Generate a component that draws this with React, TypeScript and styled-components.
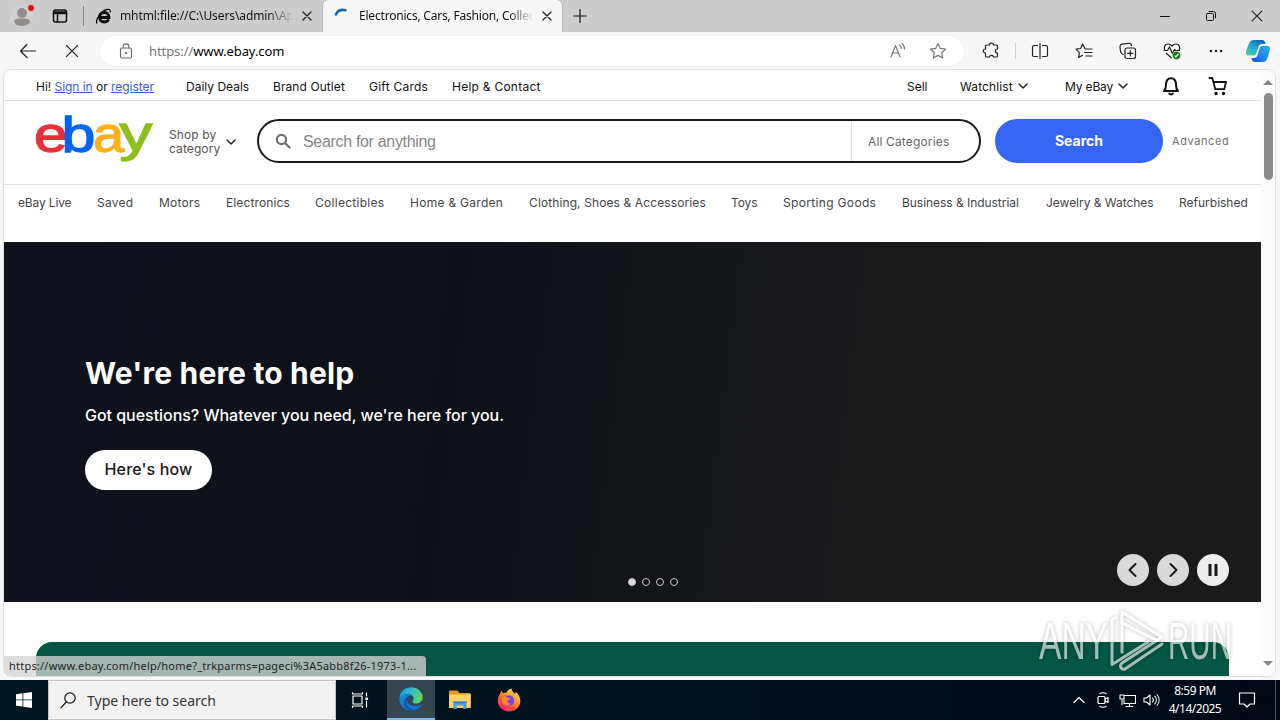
import React from 'react';
import styled, { createGlobalStyle } from 'styled-components';

const UI_FONT = "'Noto Sans', 'Open Sans', sans-serif";
const MARKET_FONT = "Inter, 'Liberation Sans', sans-serif";

const GlobalStyle = createGlobalStyle`
  * {
    box-sizing: border-box;
  }

  body {
    margin: 0;
    overflow: hidden;
    background: #f7f7f7;
  }

  svg {
    display: block;
    flex: none;
  }
`;

const Screen = styled.div`
  position: relative;
  width: 1280px;
  height: 720px;
  display: flex;
  flex-direction: column;
  overflow: hidden;
  background: #f7f7f7;
  font-family: ${UI_FONT};
  white-space: nowrap;
`;

/* Tab strip */

const TabStrip = styled.div`
  height: 32px;
  display: flex;
  align-items: stretch;
  background: #cccccc;
`;

const ProfileArea = styled.div`
  width: 83px;
  display: flex;
  align-items: center;
  padding-left: 11px;
  gap: 15px;
`;

const TabSeparator = styled.div`
  width: 1px;
  height: 20px;
  align-self: center;
  background: #858585;
`;

const Tab = styled.div<{ $active?: boolean; $width: number }>`
  width: ${(props) => props.$width}px;
  display: flex;
  align-items: center;
  padding: 0 10px 0 11px;
  font-size: 12px;
  color: #111;
  background: ${(props) => (props.$active ? '#f7f7f7' : 'transparent')};
  border-left: ${(props) => (props.$active ? '1px solid #b4b4b4' : 'none')};
  border-right: ${(props) => (props.$active ? '1px solid #b4b4b4' : 'none')};
  border-radius: ${(props) => (props.$active ? '6px 6px 0 0' : '0')};
`;

const TabTitle = styled.span<{ $spacing: number }>`
  flex: 1;
  margin: 0 10px 0 8px;
  overflow: hidden;
  line-height: 18px;
  letter-spacing: ${(props) => props.$spacing}px;
  mask-image: linear-gradient(90deg, #000 86%, transparent 101%);
`;

const NewTab = styled.div`
  width: 34px;
  display: flex;
  align-items: center;
  justify-content: center;
`;

const WindowControls = styled.div`
  margin-left: auto;
  display: grid;
  grid-template-columns: 46px 46px 46px;
  align-items: center;
  justify-items: center;
`;

/* Toolbar */

const Toolbar = styled.div`
  height: 37px;
  flex: none;
  display: flex;
  align-items: center;
  background: #f7f7f7;
`;

const ToolButton = styled.div<{ $width: number }>`
  width: ${(props) => props.$width}px;
  flex: none;
  display: flex;
  align-items: center;
  justify-content: center;
`;

const AddressBar = styled.div`
  width: 864px;
  height: 30px;
  display: flex;
  align-items: center;
  padding: 0 16px 0 17px;
  border-radius: 15px;
  background: #fff;
  box-shadow: 0 0 2px rgba(0, 0, 0, 0.08);
`;

const Url = styled.span`
  flex: 1;
  margin-left: 14px;
  font-size: 13px;
  letter-spacing: -0.08px;
  color: #000;

  span {
    color: #767676;
  }
`;

const ToolDivider = styled.div`
  width: 1px;
  height: 16px;
  margin: 0 1px 0 -3px;
  background: #d0d0d0;
`;

/* Page frame */

const Viewport = styled.div`
  position: relative;
  width: 1273px;
  height: 608px;
  flex: none;
  margin-left: 3px;
  display: flex;
  overflow: hidden;
  border: 1px solid #dedede;
  border-radius: 8px;
  background: #fff;
`;

const Page = styled.div`
  width: 1257px;
  display: flex;
  flex-direction: column;
  font-family: ${MARKET_FONT};
  overflow: hidden;
`;

const Scrollbar = styled.div`
  width: 14px;
  display: flex;
  flex-direction: column;
  align-items: center;
  padding: 10px 0;
  background: #fcfcfc;
`;

const Thumb = styled.div`
  width: 9px;
  height: 87px;
  margin: 8px 0 auto;
  border-radius: 5px;
  background: #8b8b8b;
`;

const UtilityBar = styled.div`
  height: 31px;
  flex: none;
  display: flex;
  align-items: center;
  padding: 2px 0 0 32px;
  border-bottom: 1px solid #e0e0e0;
  font-size: 12px;
  color: #111;
`;

const UtilityItem = styled.div<{ $width: number; $spacing?: number }>`
  width: ${(props) => props.$width}px;
  flex: none;
  display: flex;
  align-items: center;
  letter-spacing: ${(props) => props.$spacing ?? 0}px;

  svg {
    margin-left: 5px;
  }
`;

const Link = styled.span`
  color: #3559d8;
  text-decoration: underline;
`;

const SearchHeader = styled.div`
  height: 84px;
  flex: none;
  display: flex;
  align-items: flex-start;
  padding: 12px 0 0 32px;
  border-bottom: 1px solid #e0e0e0;
`;

const ShopBy = styled.div`
  width: 88px;
  display: flex;
  align-items: center;
  gap: 6px;
  margin: 15px 0 0 15px;
  font-size: 12px;
  line-height: 14px;
  letter-spacing: 0.1px;
  color: #555;
`;

const SearchBox = styled.div`
  width: 724px;
  height: 44px;
  display: flex;
  align-items: center;
  margin: 6px 14px 0 0;
  padding-left: 16px;
  border: 2px solid #191919;
  border-radius: 22px;
`;

const Placeholder = styled.span`
  flex: 1;
  margin-left: 12px;
  padding-top: 2px;
  font-family: 'Liberation Sans', Arial, sans-serif;
  font-size: 16px;
  letter-spacing: -0.32px;
  color: #858585;
`;

const CategorySelect = styled.div`
  width: 128px;
  height: 40px;
  display: flex;
  align-items: center;
  padding-left: 16px;
  border-left: 1px solid #dcdcdc;
  font-size: 12px;
  letter-spacing: 0.15px;
  color: #666;
`;

const SearchButton = styled.div`
  width: 168px;
  height: 44px;
  margin-top: 6px;
  display: flex;
  align-items: center;
  justify-content: center;
  border-radius: 22px;
  background: #3665f3;
  color: #fff;
  font-size: 14px;
  font-weight: 700;
  line-height: 16px;
`;

const Advanced = styled.div`
  margin: 21px 0 0 9px;
  font-size: 11px;
  line-height: 14px;
  letter-spacing: 0.58px;
  color: #707070;
`;

const CategoryNav = styled.div`
  height: 57px;
  flex: none;
  display: flex;
  padding: 10px 0 0 14px;
  font-size: 12px;
  line-height: 16px;
  color: #444;
`;

const CategoryLink = styled.span<{ $width: number; $spacing: number }>`
  width: ${(props) => props.$width}px;
  flex: none;
  letter-spacing: ${(props) => props.$spacing}px;
`;

/* Hero carousel */

const Hero = styled.div`
  position: relative;
  height: 360px;
  flex: none;
  display: flex;
  flex-direction: column;
  align-items: flex-start;
  padding: 113px 0 0 81px;
  background: linear-gradient(97deg, #0f121a 0%, #0e1118 36%, #131519 50%, #18181a 66%, #1a1a1a 80%);
  color: #fff;
`;

const HeroTitle = styled.h2`
  margin: 0;
  font-size: 30px;
  line-height: 36px;
  font-weight: 700;
  letter-spacing: 0.17px;
`;

const HeroText = styled.p`
  margin: 12px 0 0;
  font-size: 16px;
  line-height: 24px;
  font-weight: 500;
  letter-spacing: -0.03px;
`;

const HeroButton = styled.div`
  width: 127px;
  height: 40px;
  margin-top: 23px;
  padding-bottom: 2px;
  display: flex;
  align-items: center;
  justify-content: center;
  border-radius: 20px;
  background: #fff;
  color: #191919;
  font-size: 16px;
  font-weight: 500;
  letter-spacing: 0.15px;
`;

const Dots = styled.div`
  position: absolute;
  left: 624px;
  bottom: 16px;
  display: flex;
  gap: 6px;
`;

const Dot = styled.span<{ $filled?: boolean }>`
  width: 8px;
  height: 8px;
  border: 1px solid #c7c7c7;
  border-radius: 50%;
  background: ${(props) => (props.$filled ? '#dcdcdc' : 'transparent')};
`;

const CarouselControls = styled.div`
  position: absolute;
  right: 32px;
  bottom: 16px;
  display: flex;
  gap: 8px;
`;

const RoundButton = styled.div<{ $bright?: boolean }>`
  width: 32px;
  height: 32px;
  display: flex;
  align-items: center;
  justify-content: center;
  border-radius: 50%;
  background: ${(props) => (props.$bright ? '#ededed' : '#d9d9d9')};
`;

const GreenBanner = styled.div`
  height: 60px;
  flex: none;
  margin: 40px 32px 0;
  border-radius: 16px 16px 0 0;
  background: #055642;
`;

const StatusBubble = styled.div`
  position: absolute;
  left: 0;
  bottom: 0;
  width: 422px;
  height: 20px;
  padding-left: 5px;
  border-radius: 0 4px 0 0;
  background: rgba(212, 212, 212, 0.77);
  font-size: 11px;
  line-height: 19px;
  letter-spacing: 0.22px;
  color: #1d2422;
`;

const Watermark = styled.svg`
  position: absolute;
  left: 1030px;
  top: 604px;
  opacity: 0.62;
  overflow: visible;
  font-family: 'Liberation Sans', Arial, sans-serif;
  font-size: 51px;
  filter: drop-shadow(0 0 2px rgba(0, 0, 0, 0.45));
`;

/* Taskbar */

const Taskbar = styled.div`
  height: 40px;
  flex: none;
  display: flex;
  align-items: center;
  margin-top: 3px;
  background: linear-gradient(90deg, #001620 0%, #00121e 42%, #010b1a 80%, #010917 100%);
  color: #fff;
`;

const TaskSearch = styled.div`
  width: 288px;
  height: 40px;
  display: flex;
  align-items: center;
  gap: 11px;
  padding-left: 11px;
  border: 1px solid #c4c4c4;
  background: #f2f2f2;
  color: #333;
  font-size: 14px;
`;

const TaskButton = styled.div<{ $width: number; $open?: boolean }>`
  width: ${(props) => props.$width}px;
  height: 40px;
  flex: none;
  display: flex;
  align-items: center;
  justify-content: center;
  background: ${(props) => (props.$open ? '#34464f' : 'transparent')};
  border-bottom: ${(props) => (props.$open ? '2px solid #76b9ed' : 'none')};
`;

const TaskViewButton = styled(TaskButton)`
  padding-right: 3px;
`;

const Tray = styled.div`
  margin-left: auto;
  height: 40px;
  display: flex;
  align-items: center;
`;

const Clock = styled.div`
  width: 64px;
  text-align: center;
  font-size: 12px;
  line-height: 18px;
  letter-spacing: -0.5px;
`;

const DesktopPeek = styled.div`
  width: 5px;
  height: 40px;
  border-left: 1px solid #4d5661;
`;

const categories = [
  { label: 'eBay Live', width: 79, spacing: -0.15 },
  { label: 'Saved', width: 62, spacing: 0.25 },
  { label: 'Motors', width: 67, spacing: 0.25 },
  { label: 'Electronics', width: 89, spacing: 0.12 },
  { label: 'Collectibles', width: 95, spacing: 0.28 },
  { label: 'Home & Garden', width: 119, spacing: 0.28 },
  { label: 'Clothing, Shoes & Accessories', width: 202, spacing: 0.11 },
  { label: 'Toys', width: 52, spacing: -0.1 },
  { label: 'Sporting Goods', width: 119, spacing: 0.33 },
  { label: 'Business & Industrial', width: 144, spacing: -0.04 },
  { label: 'Jewelry & Watches', width: 133, spacing: -0.03 },
  { label: 'Refurbished', width: 72, spacing: 0 },
];

interface IconProps {
  width?: number;
  height?: number;
  viewBox?: string;
  stroke?: string;
  weight?: number;
  children: React.ReactNode;
}

const LineIcon: React.FC<IconProps> = ({
  width = 18,
  height = 18,
  viewBox,
  stroke = '#222',
  weight = 1.2,
  children,
}) => (
  <svg
    width={width}
    height={height}
    viewBox={viewBox ?? `0 0 ${width} ${height}`}
    fill="none"
    stroke={stroke}
    strokeWidth={weight}
    strokeLinecap="round"
    strokeLinejoin="round"
  >
    {children}
  </svg>
);

const Chevron = ({ weight = 1.5 }: { weight?: number }) => (
  <LineIcon width={10} height={8} weight={weight}>
    <path d="M1 2l4 4 4-4" />
  </LineIcon>
);

const CloseIcon = ({ size = 10, weight = 1.3 }: { size?: number; weight?: number }) => (
  <LineIcon width={size} height={size} viewBox="0 0 10 10" weight={weight}>
    <path d="M1 1l8 8M9 1L1 9" />
  </LineIcon>
);

const ProfileIcon = () => (
  <svg width="26" height="26" viewBox="0 0 26 26">
    <circle cx="11" cy="13" r="11" fill="#d3d0ce" />
    <circle cx="11" cy="10" r="4.900" fill="#8f8d8c" />
    <path d="M3 19c0-3 3-3.500 8-3.500s8 .5 8 3.500c-1.500 3-4.500 4-8 4s-6.500-1-8-4z" fill="#8f8d8c" />
    <circle cx="20" cy="5" r="3.400" fill="#e00b12" stroke="#eee" strokeWidth=".6" />
  </svg>
);

const CopilotLogo = () => (
  <svg width="26" height="26" viewBox="0 0 26 26">
    <defs>
      <linearGradient id="copA" x1="0" y1="1" x2=".7" y2="0">
        <stop offset="0" stopColor="#62d184" />
        <stop offset=".4" stopColor="#24b8cf" />
        <stop offset="1" stopColor="#1268c3" />
      </linearGradient>
      <linearGradient id="copB" x1="1" y1="0" x2="0" y2="1">
        <stop offset="0" stopColor="#21b7f1" />
        <stop offset=".5" stopColor="#2388ec" />
        <stop offset="1" stopColor="#1550cb" />
      </linearGradient>
    </defs>
    <path d="M9 2h8c2.500 0 3 2 3.600 4H17c-2 0-3 1-3.600 3l-2 6c-.7 2-1.600 2.500-3.400 2.500H4c-3 0-3.700-2-2.800-5L4 5.500C5 3 6.500 2 9 2z" fill="url(#copA)" />
    <path d="M17.500 24H10c-2.500 0-3-2-3.600-4H9c2 0 3-1 3.600-3l2-6.500c.7-2 1.600-2.800 3.400-2.800h4c3 0 3.500 2.300 2.700 5L22.500 20c-1 3-2.500 4-5 4z" fill="url(#copB)" />
  </svg>
);

const EdgeLogo = () => (
  <svg width="24" height="24" viewBox="0 0 24 24">
    <defs>
      <linearGradient id="edgeTop" x1="0" y1=".3" x2="1" y2=".5">
        <stop offset="0" stopColor="#1b9de2" />
        <stop offset=".55" stopColor="#35c1c6" />
        <stop offset="1" stopColor="#61d84b" />
      </linearGradient>
      <linearGradient id="edgeBody" x1="0" y1="0" x2="1" y2="1">
        <stop offset="0" stopColor="#1994df" />
        <stop offset="1" stopColor="#0c59a4" />
      </linearGradient>
    </defs>
    <path d="M.5 11C1 4.500 6 .3 12 .3c7 0 11.700 5 11.700 10 0 4-3 6.200-6.300 6.200-2.800 0-4-1-4-1.800 0-.8 1.200-1.200 1.200-3.200 0-2.500-2.300-4.300-5.500-4.300C4.500 7.200 1.500 9.500.5 11z" fill="url(#edgeTop)" />
    <path d="M.5 11c1-2.300 4-3.800 7.500-3.800 1.500 0 3 .3 4 1-3 1-4.500 3.500-4.500 6.300 0 4.500 4 8 8.800 8.500-1.300.5-2.700.8-4.300.8C5 23.800-.2 18 .5 11z" fill="url(#edgeBody)" />
    <path d="M8.500 13.500c0-2 1-4 2.800-4.700-5 1-7.300 6-5 10.200 2 3.500 6 5 10 4 2.800-.8 5-2.500 6.300-4.700.2-.5-.2-.7-.6-.5-6 2.800-13.500.5-13.500-4.300z" fill="#164b94" />
    <path d="M8.300 13.500c0 4.800 7.500 7.100 13.500 4.300.4-.2.800 0 .6.500-1.500 2.500-4 4-6.500 4.700-5-.3-9-4-9-8.500z" fill="#1177c9" />
  </svg>
);

const ExplorerLogo = () => (
  <svg width="22" height="20" viewBox="0 0 22 20">
    <path d="M0 2c0-1 .5-1.500 1.500-1.500h7L10.500 3H20c1.200 0 1.700.5 1.700 1.500V17H0z" fill="#e39a1c" />
    <path d="M0 4.500h21.700V18H0z" fill="#fbd16a" />
    <path d="M4.500 19v-7.500h13V19h-3.300v-3.500H7.800V19z" fill="#4d9fd6" />
    <path d="M4.500 11.500h13v1.800h-13z" fill="#2f83c4" />
  </svg>
);

const FirefoxLogo = () => (
  <svg width="24" height="24" viewBox="0 0 24 24">
    <defs>
      <linearGradient id="foxBody" x1=".85" y1="0" x2=".2" y2="1">
        <stop offset="0" stopColor="#fff044" />
        <stop offset=".4" stopColor="#ff9a26" />
        <stop offset=".7" stopColor="#ff4a3c" />
        <stop offset="1" stopColor="#e81f7c" />
      </linearGradient>
    </defs>
    <path d="M3 6c.3-1.500 1-2.600 1.700-3.300.2 1.200.8 2 1.500 2.500 1-.4 2-.5 3-.3C10.500 2.500 12.500 1 14.500.5c0 2.500 2 3.700 3.500 5.500.5-.5.500-1.500.4-2.200 3 2 4.900 5.400 4.900 9.200 0 6-5 10.500-11.200 10.500S.8 18.700.8 12.800C.8 10 1.700 7.700 3 6z" fill="url(#foxBody)" />
    <circle cx="12" cy="12.500" r="5.300" fill="#7446e2" />
    <path d="M5.500 9.500c1.500-1.300 3.800-1.200 5 .2.900.9 2 .6 3 .8-.5 1.600-2.500 1.700-3 2.700-.4 1.500 1.500 3 3.500 2.300-1.500 2.700-7 2.500-8.500-1.200-.6-1.600-.6-3.300 0-4.800z" fill="#ff8b28" />
  </svg>
);

const LogoSvg = styled.svg`
  overflow: visible;
  font-family: 'Liberation Sans', Arial, sans-serif;
  font-size: 49.5px;
`;

const EbayLogo = () => (
  <LogoSvg width="118" height="50" viewBox="0 0 118 50" strokeWidth="1.300">
    <text transform="translate(-2 38.700) scale(1.220 1)" fill="#e53238" stroke="#e53238">e</text>
    <text transform="translate(25.500 38.700) scale(1.230 1)" fill="#0064f2" stroke="#0064f2">b</text>
    <text transform="translate(57 38.700) scale(1.130 1)" fill="#fbb01c" stroke="#fbb01c">a</text>
    <text transform="translate(83.500 37.700) scale(1.330 1)" fill="#8cbf1c" stroke="#8cbf1c">y</text>
  </LogoSvg>
);

export default function App() {
  return (
    <Screen>
      <GlobalStyle />

      <TabStrip>
        <ProfileArea>
          <ProfileIcon />
          <LineIcon width={16} height={16} weight={1.5} stroke="#111">
            <rect x="1.500" y="2" width="13" height="12" rx="2" />
            <path d="M1.500 5.500h13M5.500 5.500V14M2 4h12" />
          </LineIcon>
        </ProfileArea>
        <TabSeparator />
        <Tab $width={238}>
          <svg width="17" height="17" viewBox="0 0 17 17" fill="none" stroke="#0b0b0b">
            <path d="M4 9.500h10c0-3-2-5-4.700-5S4.500 6.500 4.500 9.300s2 4.700 4.800 4.700c2 0 3.500-.9 4.300-2.600" strokeWidth="2.800" />
            <path d="M2.200 15.500C-.3 12 6 3 12 1.500c2.500-.6 3.700.4 3 3" strokeWidth="1.300" />
          </svg>
          <TabTitle $spacing={-0.1}>mhtml:file://C:\Users\admin\App</TabTitle>
          <CloseIcon />
        </Tab>
        <Tab $active $width={241}>
          <LineIcon width={17} height={16} stroke="#1f66a8" weight={2.6}>
            <path d="M2 6.500C3.500 2.800 7 1.200 11.500 2.300" />
          </LineIcon>
          <TabTitle $spacing={-0.2}>Electronics, Cars, Fashion, Collect</TabTitle>
          <CloseIcon />
        </Tab>
        <NewTab>
          <LineIcon width={14} height={14} stroke="#111">
            <path d="M7 .5v13M.5 7h13" />
          </LineIcon>
        </NewTab>
        <WindowControls>
          <LineIcon width={10} height={10} stroke="#111" weight={1}>
            <path d="M0 5.500h10" />
          </LineIcon>
          <LineIcon width={10} height={10} stroke="#111" weight={1}>
            <rect x=".5" y="2.500" width="7" height="7" rx="1" />
            <path d="M3 .5h4.500a2 2 0 0 1 2 2V7" />
          </LineIcon>
          <CloseIcon size={12} weight={1} />
        </WindowControls>
      </TabStrip>

      <Toolbar>
        <ToolButton $width={56}>
          <LineIcon width={18} height={16}>
            <path d="M1.500 8h15M8 1.500L1.500 8 8 14.500" />
          </LineIcon>
        </ToolButton>
        <ToolButton $width={32}>
          <CloseIcon size={14} weight={0.9} />
        </ToolButton>
        <ToolButton $width={12} />
        <AddressBar>
          <LineIcon width={18} height={18} stroke="#666" weight={1.1}>
            <rect x="3.500" y="6" width="11" height="10" rx="1.500" />
            <path d="M6.200 6V4.500C6.200 1 11.800 1 11.800 4.500V6" />
            <circle cx="9" cy="11" r=".5" fill="#666" />
          </LineIcon>
          <Url>
            <span>https://</span>www.ebay.com
          </Url>
          <ToolButton $width={60}>
            <LineIcon width={18} height={18} stroke="#777">
              <path d="M2 15L6.500 3.500 11 15M3.500 11h6M10.500 3c1.200.7 1.700 1.800 1.700 3.300M13 1.500c1.700 1.300 2.700 3 2.500 5.500" />
            </LineIcon>
          </ToolButton>
          <ToolButton $width={20}>
            <LineIcon width={18} height={18} stroke="#777">
              <path d="M9 1.500l2.300 4.900 5.300.7-3.900 3.600 1 5.300L9 13.400 4.300 16l1-5.300L1.400 7.100l5.300-.7z" />
            </LineIcon>
          </ToolButton>
        </AddressBar>
        <ToolButton $width={54}>
          <LineIcon width={18} height={18}>
            <path d="M4.500 3H7.500c0-2.600 4-2.600 4 0h3c.6 0 1 .4 1 1v3c-2.800 0-2.800 4 0 4v3c0 .6-.4 1-1 1h-3c0-2.200-4-2.200-4 0h-3c-.6 0-1-.4-1-1v-3c-3 0-3-4 0-4V4c0-.6.400-1 1-1z" />
          </LineIcon>
        </ToolButton>
        <ToolDivider />
        <ToolButton $width={45}>
          <LineIcon width={18} height={18}>
            <path d="M9 1.500v15M6.500 3.500H3c-1 0-1.500.5-1.500 1.500v8c0 1 .5 1.500 1.500 1.500h3.500M11.500 3.500H15c1 0 1.500.5 1.500 1.500v8c0 1-.5 1.500-1.500 1.500h-3.500" />
          </LineIcon>
        </ToolButton>
        <ToolButton $width={44}>
          <LineIcon width={18} height={18}>
            <path d="M10 6.500L7.500 2 5.600 6.500l-4.600.6 3.400 3.500-.8 5 4-2.300M10.500 7H17M9.500 10.500H17M11 14h6" />
          </LineIcon>
        </ToolButton>
        <ToolButton $width={44}>
          <LineIcon width={18} height={18}>
            <rect x="6" y="6" width="10.500" height="10.500" rx="2" />
            <path d="M11.300 8.500v5.500M8.500 11.300h5.500M4 12.500C2.500 12 1.500 10 1.200 7.500L1 4.500C1 3 1.600 2.400 3 2.200L9.500 1.300c1.800-.2 2.800.5 3 2.200" />
          </LineIcon>
        </ToolButton>
        <ToolButton $width={44}>
          <svg width="18" height="18" viewBox="0 0 18 18" fill="none" stroke="#222" strokeWidth="1.200">
            <path d="M1.800 8C.5 5 2 2 5 2c2 0 3 .8 4 2 1-1.200 2-2 4-2 3 0 4.500 3 3.200 6M3 11l5.500 5M.5 8.500h4L6.500 5l3 6.500 2-4 1 1H17" />
            <circle cx="13.500" cy="13.500" r="4.200" fill="#107c10" stroke="#f7f7f7" strokeWidth=".6" />
            <path d="M11.500 13.700l1.300 1.300 2.700-3" stroke="#fff" />
          </svg>
        </ToolButton>
        <ToolButton $width={44}>
          <svg width="14" height="4" viewBox="0 0 14 4" fill="#111">
            <circle cx="2" cy="2" r="1.200" />
            <circle cx="7" cy="2" r="1.200" />
            <circle cx="12" cy="2" r="1.200" />
          </svg>
        </ToolButton>
        <ToolButton $width={40}>
          <CopilotLogo />
        </ToolButton>
      </Toolbar>

      <Viewport>
        <Page>
          <UtilityBar>
            <UtilityItem $width={150} $spacing={-0.04}>
              <span>
                Hi! <Link>Sign in</Link> or <Link>register</Link>
              </span>
            </UtilityItem>
            <UtilityItem $width={87}>Daily Deals</UtilityItem>
            <UtilityItem $width={96} $spacing={0.08}>Brand Outlet</UtilityItem>
            <UtilityItem $width={83} $spacing={0.25}>Gift Cards</UtilityItem>
            <UtilityItem $width={455} $spacing={0.25}>Help &amp; Contact</UtilityItem>
            <UtilityItem $width={53}>Sell</UtilityItem>
            <UtilityItem $width={105} $spacing={0.12}>
              Watchlist
              <Chevron />
            </UtilityItem>
            <UtilityItem $width={91} $spacing={-0.15}>
              My eBay
              <Chevron />
            </UtilityItem>
            <UtilityItem $width={47}>
              <LineIcon width={20} height={20} stroke="#111" weight={2}>
                <path d="M3 15h14c-1.700-1.700-2-3-2-6 0-4-1.700-6.800-5-6.800S5 5 5 9c0 3-.3 4.300-2 6zM8.200 17.500c.8 1.200 2.800 1.200 3.600 0" />
              </LineIcon>
            </UtilityItem>
            <UtilityItem $width={30}>
              <LineIcon width={20} height={20} stroke="#111" weight={1.8}>
                <path d="M1.500 2h2.800l3 11.200h9L18 6H5.500" />
                <circle cx="8" cy="17.500" r=".8" fill="#111" />
                <circle cx="15.500" cy="17.500" r=".8" fill="#111" />
              </LineIcon>
            </UtilityItem>
          </UtilityBar>

          <SearchHeader>
            <EbayLogo />
            <ShopBy>
              <span>
                Shop by
                <br />
                category
              </span>
              <Chevron />
            </ShopBy>
            <SearchBox>
              <LineIcon width={16} height={16} stroke="#707070" weight={2.2}>
                <circle cx="6.500" cy="6.500" r="4.600" />
                <path d="M10.300 10.300l4.200 4.200" />
              </LineIcon>
              <Placeholder>Search for anything</Placeholder>
              <CategorySelect>All Categories</CategorySelect>
            </SearchBox>
            <SearchButton>Search</SearchButton>
            <Advanced>Advanced</Advanced>
          </SearchHeader>

          <CategoryNav>
            {categories.map((category) => (
              <CategoryLink key={category.label} $width={category.width} $spacing={category.spacing}>
                {category.label}
              </CategoryLink>
            ))}
          </CategoryNav>

          <Hero>
            <HeroTitle>We're here to help</HeroTitle>
            <HeroText>Got questions? Whatever you need, we're here for you.</HeroText>
            <HeroButton>Here's how</HeroButton>
            <Dots>
              <Dot $filled />
              <Dot />
              <Dot />
              <Dot />
            </Dots>
            <CarouselControls>
              <RoundButton>
                <LineIcon width={16} height={16} weight={2} stroke="#191919">
                  <path d="M10.500 2L4.500 8l6 6" />
                </LineIcon>
              </RoundButton>
              <RoundButton>
                <LineIcon width={16} height={16} weight={2} stroke="#191919">
                  <path d="M5.500 2l6 6-6 6" />
                </LineIcon>
              </RoundButton>
              <RoundButton $bright>
                <svg width="16" height="16" viewBox="0 0 16 16" fill="#191919">
                  <rect x="3.500" y="2" width="3" height="12" rx=".5" />
                  <rect x="9.500" y="2" width="3" height="12" rx=".5" />
                </svg>
              </RoundButton>
            </CarouselControls>
          </Hero>

          <GreenBanner />
        </Page>
        <Scrollbar>
          <svg width="10" height="5" viewBox="0 0 10 5" fill="#858585">
            <path d="M5 0l5 5H0z" />
          </svg>
          <Thumb />
          <svg width="10" height="5" viewBox="0 0 10 5" fill="#858585">
            <path d="M0 0h10L5 5z" />
          </svg>
        </Scrollbar>
        <StatusBubble>https://www.ebay.com/help/home?_trkparms=pageci%3A5abb8f26-1973-1...</StatusBubble>
      </Viewport>

      <Taskbar>
        <TaskButton $width={48}>
          <svg width="16" height="16" viewBox="0 0 16 16" fill="#fff">
            <path d="M0 2.200l6.500-.9v6.200H0zM7.300 1.200L16 0v7.500H7.300zM0 8.300h6.500v6.300L0 13.700zM7.300 8.300H16V16l-8.700-1.200z" />
          </svg>
        </TaskButton>
        <TaskSearch>
          <LineIcon width={16} height={17} stroke="#111">
            <circle cx="10" cy="6" r="5.200" />
            <path d="M6.300 10L.8 15.800" />
          </LineIcon>
          Type here to search
        </TaskSearch>
        <TaskViewButton $width={51}>
          <LineIcon width={18} height={16} weight={1.2} stroke="#fff">
            <rect x="2" y="4" width="9" height="8" />
            <path d="M1.500.6V2h10V.6M1.500 15.400V14h10v1.400M15.500 1v3M15.500 9v6" />
            <rect x="15" y="6" width="1.500" height="1.500" fill="#fff" />
          </LineIcon>
        </TaskViewButton>
        <TaskButton $width={48} $open>
          <EdgeLogo />
        </TaskButton>
        <TaskButton $width={49}>
          <ExplorerLogo />
        </TaskButton>
        <TaskButton $width={49}>
          <FirefoxLogo />
        </TaskButton>
        <Tray>
          <TaskButton $width={24}>
            <LineIcon width={12} height={8} stroke="#fff">
              <path d="M1 6.500L6 1.500l5 5" />
            </LineIcon>
          </TaskButton>
          <TaskButton $width={24}>
            <LineIcon width={14} height={16} stroke="#fff">
              <rect x="2" y="4.500" width="7" height="7" rx="1" />
              <path d="M9 7l3-1.500v5L9 9M4 1.500c2-1 4-1 6 0M4 14.500c2 1 4 1 6 0" />
            </LineIcon>
          </TaskButton>
          <TaskButton $width={24}>
            <LineIcon width={17} height={16} stroke="#fff" weight={1.1}>
              <path d="M5.500 3.500h11v8H5V8M10.500 11.500v3M7 14.500h7M3 7.500v5" />
              <rect x="1" y="3" width="4" height="4" />
            </LineIcon>
          </TaskButton>
          <TaskButton $width={24}>
            <LineIcon width={17} height={14} stroke="#fff" weight={1.1}>
              <path d="M1 5h2.500L7 2v10L3.500 9H1zM9.500 5c1 1.200 1 2.800 0 4M11.800 3.200c2 2.200 2 5.400 0 7.600M14 1.500c2.800 3.300 2.800 7.700 0 11" />
            </LineIcon>
          </TaskButton>
          <Clock>
            8:59 PM
            <br />
            4/14/2025
          </Clock>
          <TaskButton $width={40}>
            <LineIcon width={18} height={16} stroke="#fff">
              <path d="M1.500 1h15v11H12l-3 3-3-3H1.500z" />
            </LineIcon>
          </TaskButton>
          <ToolButton $width={8} />
          <DesktopPeek />
        </Tray>
      </Taskbar>

      <Watermark width="212" height="72" viewBox="0 0 212 72" fill="#fff">
        <text x="9" y="55" textLength="69" lengthAdjust="spacingAndGlyphs">ANY</text>
        <text x="138" y="55" textLength="64" lengthAdjust="spacingAndGlyphs">RUN</text>
        <g fill="none" stroke="#fff" strokeWidth="3" strokeLinejoin="round" strokeLinecap="round">
          <path d="M92 48V8l40 25L92 59c-3 3-1 7 3 6l37-25" />
          <path d="M92 19l34 17" />
          <path d="M86 13.500l-4 2v45L118 38" />
        </g>
      </Watermark>
    </Screen>
  );
}
